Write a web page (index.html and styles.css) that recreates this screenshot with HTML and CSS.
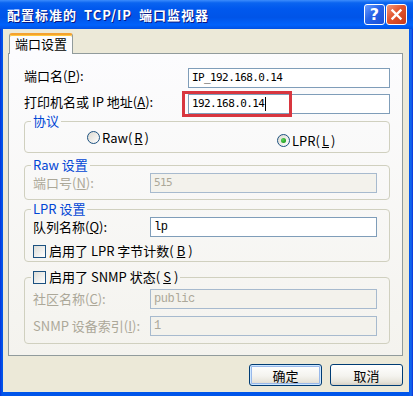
FILE: index.html
```html
<!DOCTYPE html>
<html lang="zh-CN">
<head>
    <meta charset="UTF-8">
    <title>配置标准的 TCP/IP 端口监视器</title>
    <link rel="stylesheet" href="styles.css">
</head>
<body>
    <div class="window">
        <div class="titlebar">
            <span class="title">配置标准的 TCP/IP 端口监视器</span>
            <div class="caption-buttons">
                <span class="cap-btn help">?</span>
                <span class="cap-btn close">
                    <svg width="13" height="13" viewBox="0 0 13 13">
                        <path d="M2.5 2.5 L10.5 10.5 M10.5 2.5 L2.5 10.5" stroke="#fff" stroke-width="2.4" stroke-linecap="square"/>
                    </svg>
                </span>
            </div>
        </div>

        <div class="client">
            <div class="tabs">
                <span class="tab">端口设置</span>
            </div>

            <div class="panel">
                <div class="row">
                    <label class="label-wide">端口名(<u>P</u>):</label>
                    <div class="edit edit-wide ip">IP_192.168.0.14</div>
                </div>
                <div class="row row-gap">
                    <label class="label-wide">打印机名或 IP 地址(<u>A</u>):</label>
                    <div class="mark-wrap">
                        <div class="edit edit-wide ip">192.168.0.14<span class="caret"></span></div>
                        <span class="mark"></span>
                    </div>
                </div>

                <fieldset class="group proto">
                    <legend>协议</legend>
                    <div class="radio-row">
                        <span class="radio"><span class="dot"></span>Raw(<u>R</u>)</span>
                        <span class="radio lpr"><span class="dot checked"></span>LPR(<u>L</u>)</span>
                    </div>
                </fieldset>

                <fieldset class="group raw">
                    <legend>Raw 设置</legend>
                    <div class="row disabled">
                        <label class="label-group">端口号(<u>N</u>):</label>
                        <div class="edit edit-group ip">515</div>
                    </div>
                </fieldset>

                <fieldset class="group lpr-group">
                    <legend>LPR 设置</legend>
                    <div class="row">
                        <label class="label-group">队列名称(<u>Q</u>):</label>
                        <div class="edit edit-group mono">lp</div>
                    </div>
                    <div class="check-row">
                        <span class="check"></span>启用了 LPR 字节计数(<u>B</u>)
                    </div>
                </fieldset>

                <fieldset class="group snmp">
                    <legend class="legend-check"><span class="check-row"><span class="check"></span>启用了 SNMP 状态(<u>S</u>)</span></legend>
                    <div class="row disabled">
                        <label class="label-group">社区名称(<u>C</u>):</label>
                        <div class="edit edit-group mono">public</div>
                    </div>
                    <div class="row row-gap2 disabled">
                        <label class="label-group">SNMP 设备索引(<u>I</u>):</label>
                        <div class="edit edit-group mono">1</div>
                    </div>
                </fieldset>
            </div>

            <div class="buttons">
                <button class="btn default">确定</button>
                <button class="btn">取消</button>
            </div>
        </div>
    </div>
</body>
</html>
```

FILE: styles.css
```css
body {
    margin: 0;
    font-family: "Noto Sans CJK SC", sans-serif;
    font-size: 13px;
    line-height: 16px;
    color: #000;
}
.window {
    width: 413px;
    height: 396px;
    display: flex;
    flex-direction: column;
    background: linear-gradient(90deg, #0831D9, #0055EA 2px, #0055EA 409px, #166AEE 411px, #0831D9);
}
.titlebar {
    height: 29px;
    flex-shrink: 0;
    display: flex;
    align-items: center;
    padding: 0 6px 0 7px;
    background: linear-gradient(#3C8CFC 0%, #0A64F0 10%, #0058EE 30%, #0054E8 60%, #0062FC 86%, #0050E4 100%);
    color: #fff;
}
.title {
    flex: 1;
    font-size: 13px;
    font-weight: bold;
    letter-spacing: 1px;
    word-spacing: 3px;
    text-shadow: 1px 1px #0A1883;
}
.caption-buttons {
    display: flex;
    gap: 1px;
}
.cap-btn {
    width: 21px;
    height: 21px;
    box-sizing: border-box;
    border: 1px solid #fff;
    border-radius: 3px;
    display: flex;
    align-items: center;
    justify-content: center;
}
.help {
    background: linear-gradient(135deg, #6A9CFF, #2663E8 45%, #1A4FD6);
    font-family: "DejaVu Sans", sans-serif;
    font-weight: bold;
    font-size: 16px;
    line-height: 1;
}
.close {
    background: linear-gradient(135deg, #F39A7C, #E2542D 45%, #C8391A);
}
.client {
    flex: 1;
    margin: 0 4px 4px 3px;
    padding: 4px 6px 0 5px;
    background: #ECE9D8;
}
.tabs {
    display: flex;
    height: 20px;
    padding-left: 1px;
}
.tab {
    position: relative;
    width: 64px;
    height: 21px;
    box-sizing: border-box;
    border: 1px solid #919B9C;
    border-bottom: none;
    border-top: 2px solid #F4A230;
    border-radius: 3px 3px 0 0;
    box-shadow: inset 0 1px #FFC83C;
    background: #FCFCFE;
    font-size: 13px;
    line-height: 18px;
    text-align: center;
}
.panel {
    border: 1px solid #919B9C;
    background: linear-gradient(#FCFCFE, #F4F3EE);
    padding: 14px 12px 11px 15px;
}
.row {
    display: flex;
    align-items: center;
    height: 20px;
}
.row-gap {
    margin-top: 6px;
}
.row-gap2 {
    margin-top: 7px;
}
.label-wide {
    width: 164px;
    flex-shrink: 0;
    padding-bottom: 4px;
}
.label-group {
    width: 117px;
    flex-shrink: 0;
}
.edit {
    height: 20px;
    box-sizing: border-box;
    border: 1px solid #7F9DB9;
    background: #fff;
    padding: 0 3px;
    display: flex;
    align-items: center;
    white-space: nowrap;
}
.edit-wide {
    width: 202px;
}
.edit-group {
    width: 227px;
}
.ip {
    font-family: "DejaVu Sans Mono", monospace;
    font-size: 11px;
    letter-spacing: -0.6px;
}
.mono {
    font-family: "Liberation Mono", monospace;
    font-size: 12px;
    letter-spacing: -0.4px;
}
.caret {
    display: inline-block;
    height: 14px;
    margin-left: 1px;
    border-left: 1px solid #000;
}
.disabled label {
    color: #ACA899;
}
.disabled .edit {
    background: #F3F2EC;
    border-color: #A7BACE;
    color: #ACA899;
}
.mark-wrap {
    position: relative;
}
.mark {
    position: absolute;
    left: -6px;
    top: -3px;
    width: 110px;
    height: 26px;
    box-sizing: border-box;
    border: 3px solid #D8363F;
}
.group {
    margin: 0;
    min-width: 0;
    border: 1px solid #D0D0BF;
    border-radius: 4px;
    padding: 0 11px 6px 8px;
}
.group legend {
    padding: 0 2px;
    margin-left: -2px;
    line-height: 14px;
    color: #0046D5;
}
.group .legend-check {
    color: #000;
}
.proto {
    padding-top: 3px;
    padding-bottom: 5px;
}
.raw {
    margin-top: 5px;
    padding-top: 1px;
    padding-bottom: 6px;
}
.lpr-group {
    margin-top: 2px;
    padding-top: 1px;
    padding-bottom: 3px;
}
.snmp {
    margin-top: 8px;
    padding-top: 5px;
    padding-bottom: 7px;
}
.radio-row {
    display: grid;
    grid-template-columns: 190px auto;
    height: 16px;
    padding-left: 54px;
    align-items: start;
}
.radio {
    display: flex;
    align-items: center;
    gap: 2px;
    line-height: 13px;
}
.radio.lpr {
    margin-top: 3px;
}
.dot {
    width: 13px;
    height: 13px;
    box-sizing: border-box;
    border: 1px solid #1C5180;
    border-radius: 50%;
    background: linear-gradient(135deg, #DCD9D0, #fff);
    display: flex;
    align-items: center;
    justify-content: center;
}
.dot.checked::after {
    content: "";
    width: 5px;
    height: 5px;
    border-radius: 50%;
    background: radial-gradient(circle at 35% 35%, #5DD35D, #21A121 70%);
}
.check-row {
    display: flex;
    align-items: center;
    gap: 3px;
    height: 14px;
    margin-top: 7px;
}
.legend-check .check-row {
    margin-top: 0;
}
.check {
    width: 13px;
    height: 13px;
    box-sizing: border-box;
    border: 1px solid #1C5180;
    background: linear-gradient(135deg, #DCDCD7, #fff);
}
.buttons {
    display: flex;
    justify-content: flex-end;
    gap: 8px;
    margin-top: 8px;
}
.btn {
    width: 73px;
    height: 22px;
    padding: 0;
    border: 1px solid #003C74;
    border-radius: 3px;
    background: linear-gradient(#FFFFFF, #F4F3EE 55%, #E6E3D9 85%, #D6D0C5);
    font-family: "Noto Sans CJK SC", sans-serif;
    font-size: 13px;
    color: #000;
}
.btn.default {
    box-shadow: inset 0 0 0 1px #CEE7FF, inset 0 0 0 2px #98B8EA;
}
```
